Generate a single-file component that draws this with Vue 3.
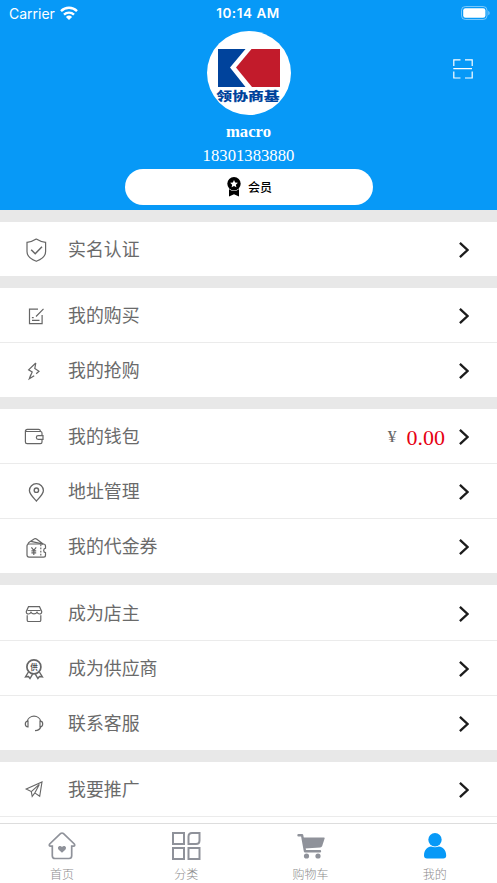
<script setup>
const groups = [
  [{ icon: 'shield', label: '实名认证' }],
  [
    { icon: 'edit', label: '我的购买' },
    { icon: 'bolt', label: '我的抢购' },
  ],
  [
    { icon: 'wallet', label: '我的钱包', amount: '0.00' },
    { icon: 'pin', label: '地址管理' },
    { icon: 'voucher', label: '我的代金券' },
  ],
  [
    { icon: 'store', label: '成为店主' },
    { icon: 'supplier', label: '成为供应商' },
    { icon: 'headset', label: '联系客服' },
  ],
  [{ icon: 'plane', label: '我要推广' }],
]

const tabs = [
  { icon: 'home', label: '首页' },
  { icon: 'grid', label: '分类' },
  { icon: 'cart', label: '购物车' },
  { icon: 'user', label: '我的' },
]
</script>

<template>
  <div class="page">
    <header class="header">
      <div class="status">
        <div class="status-left">
          <span class="carrier">Carrier</span>
          <svg class="wifi" viewBox="0 0 18 14">
            <g fill="none" stroke="#fff" stroke-width="2.400">
              <path d="M1 5.100a11.400 11.400 0 0 1 16 0" />
              <path d="M4 8.600a7.200 7.200 0 0 1 10 0" />
            </g>
            <path d="M5.900 11a4.500 4.500 0 0 1 6.200 0L9 14z" fill="#fff" />
          </svg>
        </div>
        <span class="clock">10:14 AM</span>
        <div class="status-right">
          <svg class="battery" viewBox="0 0 30 14">
            <rect x=".5" y=".5" width="25.500" height="13" rx="3.800" fill="none" stroke="#fff" stroke-opacity=".45" />
            <rect x="2.200" y="2.200" width="22.200" height="9.600" rx="2.300" fill="#fff" />
            <path d="M27.300 4.700c1.800.8 1.800 3.800 0 4.600z" fill="#fff" fill-opacity=".5" />
          </svg>
        </div>
      </div>

      <div class="avatar">
        <svg class="emblem" viewBox="0 0 62 38">
          <path d="M0 0H27.500L12 18.500 27.500 38H0z" fill="#00439c" />
          <path d="M33.500 0H62V38H34L18 18.500z" fill="#c21b2b" />
        </svg>
        <span class="brand">领协商基</span>
      </div>
      <svg class="scan" viewBox="0 0 20 20" fill="none" stroke="#fff" stroke-width="1.200">
        <path d="M.8 7V.8H7.500M12 .8h7.200V7M.8 12.500v6.500H7.500M12 19h7.200v-6.500M.3 9.600H19" />
      </svg>

      <div class="name">macro</div>
      <div class="phone">18301383880</div>
      <div class="member">
        <svg class="medal" viewBox="0 0 14 20">
          <path d="M2 12h10v7.500l-5-2.300-5 2.300z" />
          <circle cx="7" cy="6.800" r="7.300" fill="#fff" />
          <circle cx="7" cy="6.800" r="6.700" />
          <path d="M7 3l1.150 2.500 2.700.3-2 1.850.55 2.700L7 9l-2.400 1.350.55-2.700-2-1.850 2.700-.3z" fill="#fff" />
        </svg>
        <span>会员</span>
      </div>
    </header>

    <main>
      <section v-for="(group, g) in groups" :key="g" class="group">
        <div v-for="row in group" :key="row.icon" class="row">
          <svg class="row-icon" viewBox="0 0 32 32">
            <template v-if="row.icon === 'shield'">
              <path d="M16.300 6.100c3 2 6 2.900 9.300 3.200v9.200c0 4.700-4.300 8-9.300 9.800-5-1.800-9.300-5.100-9.300-9.800V9.300c3.300-.3 6.300-1.200 9.300-3.200z" />
              <path d="M11.200 16.800l4 4L22 13.700" stroke-width="1.500" />
            </template>
            <template v-else-if="row.icon === 'edit'">
              <path d="M18 10.200H9.500v14.500h12.600V16" />
              <path d="M16 17.500L23.500 9.900M12 21.300h7.500M11.900 18.600h1.800" />
            </template>
            <template v-else-if="row.icon === 'bolt'">
              <path d="M15.800 9L8.600 15.800l3.600 2.300L9.300 24.800l4.900-3M15.800 9l-1 5.400 4.200 2.900-2.800 2.500M9.300 24.800l1.500-4" />
            </template>
            <template v-else-if="row.icon === 'wallet'">
              <path d="M22 15.700v-2.600q0-1.600-1.600-1.600H5.400V22q0 1.700 1.700 1.700h13.300q1.600 0 1.600-1.600v-2.700M5.400 11.500q0-2.100 2-2.100h11.200q1.500 0 2 1.900" />
              <path d="M23 15.700h-4.800a1.850 1.850 0 0 0 0 3.700H23z" />
            </template>
            <template v-else-if="row.icon === 'pin'">
              <path d="M16.400 26c-2.700-2.900-7-6.700-7-10.400a7 6.900 0 0 1 14 0c0 3.700-4.300 7.500-7 10.400z" stroke-width="1.300" />
              <circle cx="16.400" cy="15.200" r="2.200" stroke-width="1.400" />
            </template>
            <template v-else-if="row.icon === 'voucher'">
              <path d="M9 14h14.200q2.300 0 2.300 2v2.200a2.300 2.300 0 0 0 0 4.500v2.500q0 1.900-2 1.900H9q-2 0-2-2V16q0-2 2-2z" />
              <path d="M8 14.200q.3-1.600 1.500-2.200l5-3.200q1-.5 2 .2l6.600 5M11 11.300l12.300 2.800" />
              <path d="M11.400 17.300l2.400 3 2.400-3M13.800 20.300v4.800M11.400 20.900h4.800M11.400 22.900h4.800" />
              <path d="M20.800 14.500V27" stroke-dasharray="1.700 1.400" />
            </template>
            <template v-else-if="row.icon === 'store'">
              <path d="M8.500 9.700h11l2.200 4.800q.2 2.300-2.200 2.500-1.600 0-2.500-1.800-.9 1.600-3 1.600t-3-1.600q-.9 1.800-2.500 1.800-2.400-.2-2.200-2.500z" />
              <path d="M7.500 13.500h13M7.200 18.300v4.900q0 1.300 1.300 1.300h11q1.300 0 1.300-1.300v-4.900" />
            </template>
            <template v-else-if="row.icon === 'supplier'">
              <circle cx="13.900" cy="14.900" r="7" stroke-width="1.700" />
              <path d="M8.400 20L5.500 24.800l3-.3 1.500 2 2.600-4.300M19.400 20l3 4.800-3-.3-1.500 2-2.600-4.300" stroke-width="1.400" />
              <text class="stamp" x="13.900" y="17.600">供</text>
            </template>
            <template v-else-if="row.icon === 'headset'">
              <path d="M7.300 14.300a6.800 6.200 0 0 1 13.400 0M20.700 20q-1 3.500-5.700 3.700" />
              <path d="M8 14.200q-2.700 0-2.700 2.700t2.700 2.900zM20 14.200q2.700 0 2.700 2.700T20 19.800z" />
            </template>
            <template v-else>
              <path d="M6.200 16L22 8.900l-2.300 14.400-4.900-3.400-2.600 3.500-.9-4.800zM11.300 18.600l8-7.200-4.500 8.500" stroke-width="1.100" />
            </template>
          </svg>
          <span class="row-label">{{ row.label }}</span>
          <span v-if="row.amount" class="money">
            <span class="currency">¥</span>
            <span class="amount">{{ row.amount }}</span>
          </span>
          <svg class="chevron" viewBox="0 0 10 16">
            <path d="M.9 .9L8.500 8 .9 15.100" fill="none" stroke="#1c1c1c" stroke-width="2.300" />
          </svg>
        </div>
        <div v-if="g === groups.length - 1" class="row"></div>
      </section>
    </main>

    <nav class="tabbar">
      <div v-for="tab in tabs" :key="tab.icon" class="tab" :class="{ active: tab.icon === 'user' }">
        <svg class="tab-icon" viewBox="0 0 32 30">
          <template v-if="tab.icon === 'home'">
            <path d="M14.700 2.500q1.300-1 2.600 0L28.300 13q1.200 2-1 2.200h-1.600v9.600q0 2.700-2.700 2.700H9q-2.700 0-2.700-2.700v-9.600H4.700q-2.200-.2-1-2.200z" fill="none" stroke="currentColor" stroke-width="1.700" />
            <path d="M16 21.800l-3.300-3c-2.300-2.700 1.400-5.100 3.300-2.700 1.900-2.400 5.600 0 3.300 2.700z" fill="currentColor" />
          </template>
          <template v-else-if="tab.icon === 'grid'">
            <g fill="none" stroke="currentColor" stroke-width="2">
              <rect x="3" y="2" width="11" height="11" />
              <rect x="3" y="17" width="11" height="11" />
              <rect x="18.500" y="17" width="11" height="11" />
              <path d="M22 2h7.500v7.500q0 3.500-3.500 3.500h-7.500V5.500Q18.500 2 22 2z" />
            </g>
          </template>
          <template v-else-if="tab.icon === 'cart'">
            <path d="M3.500 4.200h3.600L10 20.300h15" fill="none" stroke="currentColor" stroke-width="2.400" stroke-linecap="round" stroke-linejoin="round" />
            <path d="M7.500 6.600h21.500q.8 0 .6 1L27.200 15q-.5 1.400-2 1.500L9.500 17.500z" fill="currentColor" />
            <circle cx="11.500" cy="25" r="2.600" fill="currentColor" />
            <circle cx="23" cy="25" r="2.600" fill="currentColor" />
          </template>
          <template v-else>
            <circle cx="16" cy="8.700" r="6.700" fill="currentColor" />
            <path d="M5 24.500c0-5.500 3.500-9 7-9q4 1.600 8 0c3.500 0 7.200 3.500 7.200 9q0 3-3 3H8q-3 0-3-3z" fill="currentColor" />
          </template>
        </svg>
        <span class="tab-label">{{ tab.label }}</span>
      </div>
    </nav>
  </div>
</template>

<style>
body {
  overflow: hidden;
}
</style>

<style scoped>
.page {
  position: relative;
  height: 883px;
  overflow: hidden;
  background: #e8e8e8;
  font-family: "Liberation Serif", "Noto Sans CJK SC", serif;
}

.header {
  position: relative;
  display: flex;
  flex-direction: column;
  align-items: center;
  height: 210px;
  background: #0799f7;
  color: #fff;
}

.status {
  display: grid;
  grid-template-columns: 1fr auto 1fr;
  align-items: center;
  align-self: stretch;
  height: 26px;
  padding: 0 6px 0 9px;
  font-family: Inter, "Liberation Sans", sans-serif;
  font-size: 13.500px;
}

.status-left {
  display: flex;
  align-items: center;
  gap: 5px;
}

.carrier {
  font-size: 14px;
  letter-spacing: 0;
}

.wifi {
  width: 18px;
  height: 14px;
  margin-top: -1px;
}

.clock {
  margin-right: 4px;
  font-weight: 600;
  letter-spacing: 0.550px;
}

.status-right {
  display: flex;
  justify-content: flex-end;
}

.battery {
  width: 30px;
  height: 14px;
  margin-top: -1px;
}

.avatar {
  display: flex;
  flex-direction: column;
  align-items: center;
  flex: none;
  width: 84px;
  height: 84px;
  margin-top: 5px;
  padding-top: 18px;
  box-sizing: border-box;
  border-radius: 50%;
  background: #fff;
}

.emblem {
  flex: none;
  width: 62px;
  height: 38px;
}

.brand {
  margin-top: 2px;
  color: #00439c;
  font: 900 12px/14px "Noto Sans CJK SC", sans-serif;
  white-space: nowrap;
  transform: scaleX(1.320);
}

.scan {
  position: absolute;
  top: 59px;
  right: 24px;
  width: 20px;
  height: 20px;
}

.name {
  margin-top: 5px;
  font-size: 16.700px;
  font-weight: 700;
  line-height: 24px;
}

.phone {
  font-size: 16.700px;
  line-height: 24px;
}

.member {
  display: flex;
  align-items: center;
  justify-content: center;
  gap: 7px;
  width: 248px;
  height: 36px;
  margin-top: 1px;
  padding-left: 2px;
  box-sizing: border-box;
  border-radius: 18px;
  background: #fff;
  color: #000;
  font: 500 12px/36px "Noto Sans CJK SC", sans-serif;
}

.medal {
  width: 14px;
  height: 20px;
}

.group {
  margin-top: 12px;
  background: #fff;
}

.row {
  display: flex;
  align-items: center;
  height: 54.080px;
  padding: 0 28px 0 20px;
}

.row + .row {
  border-top: 1px solid #ebebeb;
}

.row-icon {
  width: 32px;
  height: 32px;
  fill: none;
  stroke: #666;
  stroke-width: 1.200;
}

.stamp {
  fill: #555;
  stroke: none;
  font: 700 7.500px "Noto Sans CJK SC", sans-serif;
  text-anchor: middle;
}

.row-label {
  margin-bottom: 2px;
  margin-left: 16px;
  color: #6a6a6a;
  font: 400 17.900px/26px "Noto Sans CJK SC", sans-serif;
}

.money {
  display: flex;
  align-items: center;
  gap: 10px;
  margin-right: 14px;
  margin-left: auto;
}

.currency {
  color: #666;
  font-size: 17.500px;
  line-height: 20px;
}

.amount {
  margin-top: 3px;
  color: #e60012;
  font-size: 22px;
  line-height: 24px;
}

.chevron {
  width: 10px;
  height: 16px;
  margin-top: 2px;
  margin-left: auto;
}

.money + .chevron {
  margin-left: 0;
}

.tabbar {
  position: absolute;
  right: 0;
  bottom: 0;
  left: 0;
  display: flex;
  height: 59px;
  border-top: 1px solid #ddd;
  background: #fff;
}

.tab {
  display: flex;
  flex: 1;
  flex-direction: column;
  align-items: center;
  padding-top: 7px;
  color: #8f929a;
}

.tab-icon {
  width: 32px;
  height: 30px;
}

.tab-label {
  margin-top: 4px;
  color: #8c8c8c;
  font: 300 12px/18px "Noto Sans CJK SC", sans-serif;
}

.active {
  color: #0799f7;
}
</style>
